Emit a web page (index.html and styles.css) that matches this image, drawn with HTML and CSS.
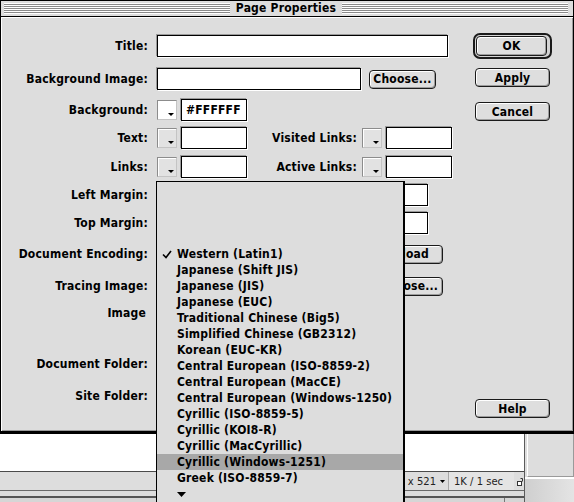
FILE: index.html
```html
<!DOCTYPE html>
<html>
<head>
<meta charset="utf-8">
<title>Page Properties</title>
<link rel="stylesheet" href="styles.css">
</head>
<body>
<div class="dialog">
  <div class="titlebar">
    <span class="stripes"></span>
    <span class="title">Page Properties</span>
    <span class="stripes"></span>
  </div>
  <div class="dialog-body">
    <div class="form">
      <div class="row row-title">
        <span class="label">Title:</span>
        <span class="field title-field"></span>
      </div>
      <div class="row">
        <span class="label">Background Image:</span>
        <span class="field image-field"></span>
        <span class="btn choose">Choose...</span>
      </div>
      <div class="row">
        <span class="label">Background:</span>
        <span class="swatch swatch-white"></span>
        <span class="field color-field">#FFFFFF</span>
      </div>
      <div class="row">
        <span class="label">Text:</span>
        <span class="swatch"></span>
        <span class="field color-field"></span>
        <span class="rlabel">Visited Links:</span>
        <span class="swatch"></span>
        <span class="field color-field"></span>
      </div>
      <div class="row">
        <span class="label">Links:</span>
        <span class="swatch"></span>
        <span class="field color-field"></span>
        <span class="rlabel">Active Links:</span>
        <span class="swatch"></span>
        <span class="field color-field"></span>
      </div>
      <div class="row">
        <span class="label">Left Margin:</span>
        <span class="field color-field margin-field"></span>
        <span class="rlabel">Margin Width:</span>
        <span class="field color-field"></span>
      </div>
      <div class="row">
        <span class="label">Top Margin:</span>
        <span class="field color-field margin-field"></span>
        <span class="rlabel">Margin Height:</span>
        <span class="field color-field"></span>
      </div>
      <div class="row row-short">
        <span class="label">Document Encoding:</span>
        <span class="popup">Western (Latin1)</span>
        <span class="btn reload">Reload</span>
      </div>
      <div class="row row-short">
        <span class="label">Tracing Image:</span>
        <span class="field trace-field"></span>
        <span class="btn browse">Choose...</span>
      </div>
      <div class="row row-short">
        <span class="label label-image">Image</span>
      </div>
      <div class="row row-short"></div>
      <div class="row row-short">
        <span class="label">Document Folder:</span>
      </div>
      <div class="row row-short">
        <span class="label">Site Folder:</span>
      </div>
    </div>
    <div class="actions">
      <div class="default-ring"><span class="btn">OK</span></div>
      <span class="btn apply">Apply</span>
      <span class="btn cancel">Cancel</span>
      <span class="btn help">Help</span>
    </div>
  </div>
</div>

<div class="docwin">
  <div class="doc-main">
    <div class="canvas"></div>
    <div class="status">
      <span class="winsize">574 x 521
        <svg class="size-arrow" width="5" height="3" viewBox="0 0 5 3"><path d="M0 0H5L2.5 3Z" fill="#000"/></svg>
      </span>
      <span class="speed">1K / 1 sec</span>
      <svg class="lock" width="6" height="8" viewBox="0 0 6 8">
        <path d="M3.5 0.5H5.5V3.5" fill="none" stroke="#333" stroke-width="1"/>
        <rect x="0.5" y="3.5" width="4" height="4" fill="#fff" stroke="#333" stroke-width="1"/>
      </svg>
    </div>
    <div class="hscroll"></div>
    <div class="tabs"><span class="tab-a"></span><span class="tab-b"></span></div>
  </div>
  <div class="doc-side">
    <div class="side-panel"></div>
    <div class="side-foot"></div>
  </div>
</div>

<div class="menu">
  <ul>
    <li class="checked">
      <svg class="check" width="10" height="9" viewBox="0 0 10 9"><path d="M1 4.5L4 7.5L9 1" fill="none" stroke="#000" stroke-width="1.6"/></svg>
      Western (Latin1)
    </li>
    <li>Japanese (Shift JIS)</li>
    <li>Japanese (JIS)</li>
    <li>Japanese (EUC)</li>
    <li>Traditional Chinese (Big5)</li>
    <li>Simplified Chinese (GB2312)</li>
    <li>Korean (EUC-KR)</li>
    <li>Central European (ISO-8859-2)</li>
    <li>Central European (MacCE)</li>
    <li>Central European (Windows-1250)</li>
    <li>Cyrillic (ISO-8859-5)</li>
    <li>Cyrillic (KOI8-R)</li>
    <li>Cyrillic (MacCyrillic)</li>
    <li class="selected">Cyrillic (Windows-1251)</li>
    <li>Greek (ISO-8859-7)</li>
    <li class="more">
      <svg width="9" height="5" viewBox="0 0 9 5"><path d="M0 0H9L4.5 5Z" fill="#000"/></svg>
    </li>
  </ul>
</div>
</body>
</html>
```

FILE: styles.css
```css
* {
  box-sizing: border-box;
}

html,
body {
  margin: 0;
  padding: 0;
}

body {
  position: relative;
  width: 574px;
  height: 502px;
  overflow: hidden;
  background: #dddddd;
  color: #000;
  font-family: "DejaVu Sans Condensed", "DejaVu Sans", sans-serif;
  font-weight: bold;
  font-size: 12px;
  letter-spacing: 0.2px;
}

/* ---------- dialog window ---------- */

.dialog {
  width: 574px;
  height: 434px;
  border: 1px solid #000;
  border-bottom-width: 3px;
  background: #dddddd;
  display: flex;
  flex-direction: column;
}

.titlebar {
  height: 16px;
  flex: none;
  border-bottom: 1px solid #000;
  display: flex;
  align-items: center;
  gap: 4px;
  padding: 0 5px 0 3px;
}

.stripes {
  flex: 1;
  height: 11px;
  background: repeating-linear-gradient(to bottom, #ffffff 0 1px, #8a8a8a 1px 2px);
}

.title {
  line-height: 15px;
  padding: 0 2px;
}

.dialog-body {
  flex: 1;
  display: flex;
  padding: 17px 21px 13px 7px;
  box-shadow: inset 1px 1px 0 #ffffff, inset -1px -1px 0 #9a9a9a;
}

/* ---------- form rows ---------- */

.form {
  flex: 1;
  display: flex;
  flex-direction: column;
}

.row {
  display: flex;
  align-items: center;
  height: 22px;
  flex: none;
}

.row-title { height: 23px; }
.row-short { height: 20px; }

.row:nth-child(2)  { margin-top: 11px; }
.row:nth-child(3)  { margin-top: 9px; }
.row:nth-child(4)  { margin-top: 6px; }
.row:nth-child(5)  { margin-top: 7px; }
.row:nth-child(6)  { margin-top: 6px; }
.row:nth-child(7)  { margin-top: 6px; }
.row:nth-child(8)  { margin-top: 10px; }
.row:nth-child(9)  { margin-top: 12px; }
.row:nth-child(10) { margin-top: 7px; }
.row:nth-child(11) { margin-top: 7px; }
.row:nth-child(12) { margin-top: 4px; }
.row:nth-child(13) { margin-top: 12px; }

.label {
  flex: none;
  width: 140px;
  margin-right: 9px;
  text-align: right;
  white-space: nowrap;
}

.label-image {
  padding-right: 2px;
}

.rlabel {
  flex: none;
  width: 110px;
  margin-right: 5px;
  text-align: right;
  white-space: nowrap;
}

.field {
  flex: none;
  height: 22px;
  background: #ffffff;
  border: 1px solid #000;
  box-shadow: -1px -1px 0 #9a9a9a, 1px 1px 0 #ffffff;
  padding: 0 4px;
  display: flex;
  align-items: center;
}

.title-field { width: 291px; }
.image-field { width: 204px; }
.color-field { width: 66px; }
.margin-field { margin-left: 24px; }
.trace-field { width: 210px; height: 20px; }

.popup {
  flex: none;
  width: 208px;
  height: 19px;
  padding-left: 20px;
  display: flex;
  align-items: center;
}

.swatch {
  position: relative;
  flex: none;
  width: 20px;
  height: 20px;
  margin-right: 4px;
  border: 1px solid;
  border-color: #8c8c8c #c4c4c4 #c4c4c4 #8c8c8c;
  background: #e2e2e2;
  box-shadow: inset 1px 1px 0 #ffffff;
}

.swatch-white {
  background: #ffffff;
}

.swatch::after {
  content: "";
  position: absolute;
  right: 2px;
  bottom: 3px;
  border-left: 3px solid transparent;
  border-right: 3px solid transparent;
  border-top: 3px solid #000;
}

/* ---------- push buttons ---------- */

.btn {
  flex: none;
  display: flex;
  align-items: center;
  justify-content: center;
  width: 75px;
  height: 19px;
  border: 1px solid #1a1a1a;
  border-radius: 4px;
  background: #dedede;
  box-shadow: inset 1px 1px 0 #ffffff, inset -1px -1px 0 #9c9c9c;
  white-space: nowrap;
}

.choose {
  width: 67px;
  margin-left: 8px;
}

.reload {
  width: 71px;
  margin-left: 7px;
}

.browse {
  width: 68px;
  margin-left: 8px;
}

.actions {
  flex: none;
  width: 79px;
  display: flex;
  flex-direction: column;
  align-items: center;
  margin-top: -1px;
}

.default-ring {
  width: 79px;
  height: 26px;
  border: 2px solid #1a1a1a;
  border-radius: 7px;
  padding: 1px;
  background: #d4d4d4;
}

.default-ring .btn {
  width: 71px;
  height: 20px;
}

.apply { margin-top: 9px; }
.cancel { margin-top: 15px; }
.help { margin-top: auto; }

/* ---------- document window behind the dialog ---------- */

.docwin {
  display: flex;
  height: 68px;
}

.doc-main {
  width: 524px;
  flex: none;
  display: flex;
  flex-direction: column;
}

.canvas {
  height: 37px;
  background: #ffffff;
}

.status {
  height: 20px;
  border-top: 1px solid #4a4a4a;
  border-bottom: 1px solid #6a6a6a;
  background: #dddddd;
  display: flex;
  align-items: center;
  justify-content: flex-end;
  font-family: "DejaVu Sans", sans-serif;
  font-weight: normal;
  font-size: 10px;
  letter-spacing: 0;
  color: #222;
}

.winsize {
  display: flex;
  align-items: center;
  gap: 4px;
  white-space: nowrap;
  margin-right: 3px;
}

.speed {
  width: 66px;
  height: 18px;
  display: flex;
  align-items: center;
  padding-left: 5px;
  border-left: 1px solid #a8a8a8;
  background: #e4e4e4;
  margin-right: 3px;
}

.lock {
  margin-right: 1px;
  margin-top: 2px;
}

.hscroll {
  height: 5px;
  background: #dddddd;
}

.tabs {
  flex: 1;
  border-top: 2px solid #555555;
  display: flex;
  justify-content: flex-end;
  background: #d6d6d6;
}

.tab-a {
  width: 20px;
  border-left: 1px solid #777777;
}

.tab-b {
  width: 0;
}

.doc-side {
  flex: 1;
  display: flex;
  flex-direction: column;
  border-left: 1px solid #5a5a5a;
}

.side-panel {
  height: 43px;
  border-left: 1px solid #ffffff;
  border-right: 1px solid #9a9a9a;
  border-bottom: 1px solid #9a9a9a;
  background: #dddddd;
  margin-left: 2px;
}

.side-foot {
  flex: 1;
  border-top: 2px solid #ffffff;
  background: linear-gradient(to right, #cfcfcf, #e4e4e4);
}

/* ---------- encoding pop-up menu ---------- */

.menu {
  position: absolute;
  left: 156px;
  top: 181px;
  width: 248px;
  height: 340px;
  border: 1px solid #000;
  box-shadow: 1px 0 0 #000;
  background: #dddddd;
}

.menu ul {
  list-style: none;
  margin: 0;
  padding: 64px 0 0;
}

.menu li {
  position: relative;
  height: 16px;
  line-height: 16px;
  padding-left: 20px;
  white-space: nowrap;
}

.menu li.selected {
  background: #a8a8a8;
}

.menu .check {
  position: absolute;
  left: 5px;
  top: 4px;
}

.menu li.more {
  display: flex;
  align-items: center;
}
```
